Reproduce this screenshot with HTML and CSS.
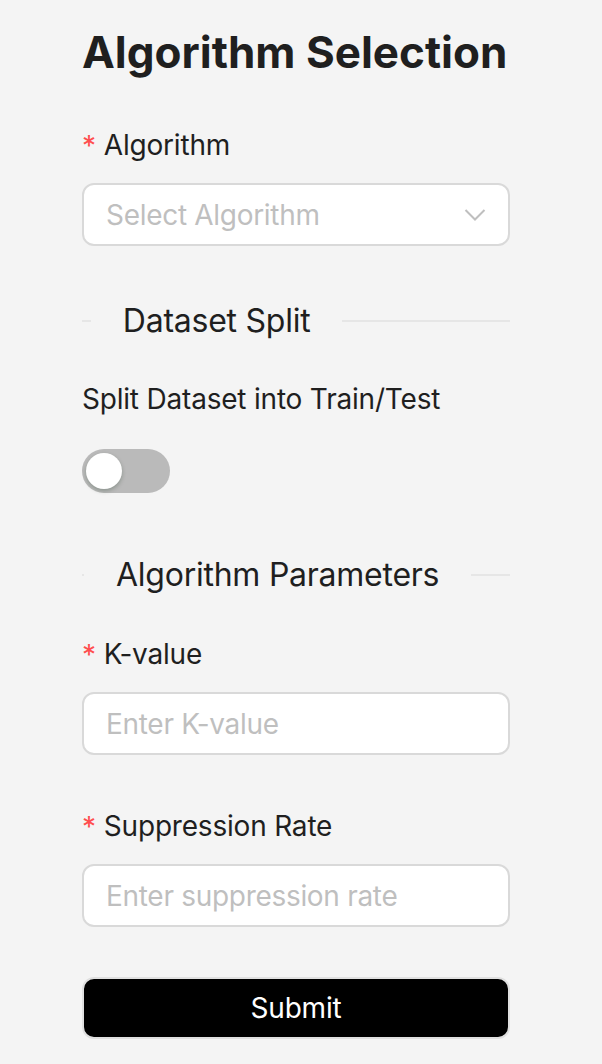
FILE: index.html
```html
<!DOCTYPE html>
<html>
<head>
<meta charset="utf-8">
<link rel="stylesheet" href="styles.css">
</head>
<body>
<div class="page">
  <h1 class="title">Algorithm Selection</h1>

  <div class="form-item">
    <label class="label"><span class="req">*</span>Algorithm</label>
    <div class="select">
      <span class="placeholder">Select Algorithm</span>
      <svg class="chevron" width="22" height="14" viewBox="0 0 22 14"><path d="M1.5 2 L11 11.5 L20.5 2" fill="none" stroke="#bfbfbf" stroke-width="2"/></svg>
    </div>
  </div>

  <div class="divider divider-first">
    <span class="line before"></span>
    <span class="divider-text">Dataset Split</span>
    <span class="line after"></span>
  </div>

  <div class="plain-label">Split Dataset into Train/Test</div>
  <div class="switch"><span class="knob"></span></div>

  <div class="divider divider-second">
    <span class="line before"></span>
    <span class="divider-text">Algorithm Parameters</span>
    <span class="line after"></span>
  </div>

  <div class="form-item form-item-k">
    <label class="label"><span class="req">*</span>K-value</label>
    <div class="input"><span class="placeholder">Enter K-value</span></div>
  </div>

  <div class="form-item form-item-rate">
    <label class="label"><span class="req">*</span>Suppression Rate</label>
    <div class="input"><span class="placeholder">Enter suppression rate</span></div>
  </div>

  <button class="submit">Submit</button>
</div>
</body>
</html>
```

FILE: styles.css
```css
html, body {
  margin: 0;
  padding: 0;
  background: #f4f4f4;
}
body {
  font-family: Inter, "Noto Sans", sans-serif;
  color: #1f1f1f;
}
.page {
  width: 428px;
  margin-left: 82px;
  padding-top: 26px;
  display: flex;
  flex-direction: column;
}
.title {
  margin: 0;
  font-size: 44px;
  font-weight: 700;
  line-height: 52px;
  color: #1f1f1f;
  white-space: nowrap;
}
.form-item {
  display: flex;
  flex-direction: column;
  margin-top: 51px;
}
.form-item-k { margin-top: 43px; }
.form-item-rate { margin-top: 55px; }
.label {
  font-size: 28px;
  line-height: 32px;
  display: flex;
  align-items: center;
  letter-spacing: -0.2px;
}
.req {
  color: #ff4d4f;
  font-size: 28px;
  margin-right: 8px;
  position: relative;
  top: 1px;
}
.select, .input {
  margin-top: 22px;
  height: 63px;
  box-sizing: border-box;
  border: 2px solid #d9d9d9;
  border-radius: 12px;
  background: #fff;
  display: flex;
  align-items: center;
  padding: 0 22px;
}
.select {
  justify-content: space-between;
}
.placeholder {
  font-size: 28px;
  color: #bfbfbf;
  letter-spacing: -0.3px;
}
.divider {
  display: flex;
  align-items: center;
  height: 40px;
}
.divider-first { margin-top: 55px; }
.divider-second { margin-top: 62px; }
.line {
  height: 2px;
  background: #e6e6e6;
  flex-basis: 0;
}
.before { flex-grow: 0.05; }
.after { flex-grow: 0.95; }
.divider-text {
  font-size: 32px;
  line-height: 40px;
  padding: 0 32px;
  white-space: nowrap;
  font-weight: 400;
  letter-spacing: -0.25px;
}
.plain-label {
  margin-top: 42px;
  font-size: 28px;
  line-height: 32px;
  letter-spacing: -0.2px;
}
.switch {
  margin-top: 34px;
  width: 88px;
  height: 44px;
  border-radius: 22px;
  background: #bababa;
  position: relative;
}
.knob {
  position: absolute;
  left: 4px;
  top: 4px;
  width: 36px;
  height: 36px;
  border-radius: 50%;
  background: #fff;
  box-shadow: 0 2px 4px rgba(0, 35, 11, 0.25);
}
.submit {
  margin-top: 50px;
  height: 62px;
  border: 2px solid #e0e0e0;
  border-radius: 12px;
  background: #000;
  color: #fff;
  font-family: Inter, "Noto Sans", sans-serif;
  font-size: 28px;
  letter-spacing: -0.2px;
  padding: 0;
}
```
